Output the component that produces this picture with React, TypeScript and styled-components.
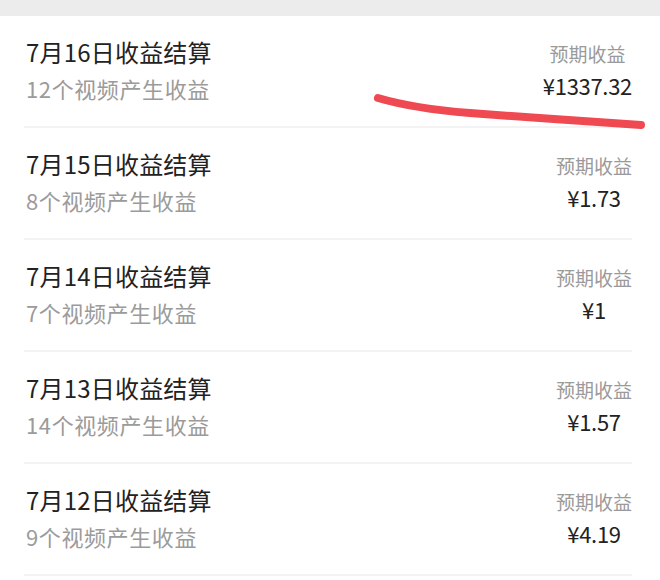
import React from 'react';
import styled, { createGlobalStyle } from 'styled-components';

interface Settlement {
  date: string;
  videos: number;
  amount: string;
}

const rows: Settlement[] = [
  { date: '7月16日', videos: 12, amount: '1337.32' },
  { date: '7月15日', videos: 8, amount: '1.73' },
  { date: '7月14日', videos: 7, amount: '1' },
  { date: '7月13日', videos: 14, amount: '1.57' },
  { date: '7月12日', videos: 9, amount: '4.19' },
];

const GlobalStyle = createGlobalStyle`
  html, body {
    margin: 0;
    padding: 0;
    background: #ffffff;
  }
  body {
    font-family: "Noto Sans CJK SC", "Noto Sans", sans-serif;
  }
`;

const Page = styled.div`
  position: relative;
  width: 660px;
  height: 580px;
  overflow: hidden;
  background: #ffffff;
`;

const TopStrip = styled.div`
  height: 16px;
  background: #ececec;
`;

const List = styled.div`
  display: flex;
  flex-direction: column;
`;

const Row = styled.div`
  display: flex;
  justify-content: space-between;
  align-items: stretch;
  height: 110px;
  margin: 0 28px 0 24px;
  border-bottom: 2px solid #f3f3f3;
`;

const Left = styled.div`
  display: flex;
  flex-direction: column;
  gap: 8px;
  padding: 22px 0 0 2px;
`;

const Title = styled.div`
  font-size: 24px;
  line-height: 28px;
  color: #222222;
  letter-spacing: 0.2px;
`;

const Sub = styled.div`
  font-size: 22px;
  line-height: 28px;
  color: #9b9b9b;
  letter-spacing: 0.6px;
`;

const Right = styled.div`
  display: flex;
  flex-direction: column;
  align-items: center;
  justify-content: center;
  gap: 3px;
  padding-bottom: 1px;
`;

const Label = styled.div`
  font-size: 19px;
  line-height: 26px;
  color: #9a9a9a;
`;

const Amount = styled.div`
  font-size: 22px;
  line-height: 30px;
  color: #222222;
  letter-spacing: -0.3px;
`;

const Scribble = styled.svg`
  position: absolute;
  left: 0;
  top: 0;
  pointer-events: none;
`;

export default function App() {
  return (
    <Page>
      <GlobalStyle />
      <TopStrip />
      <List>
        {rows.map((r) => (
          <Row key={r.date}>
            <Left>
              <Title>{r.date}收益结算</Title>
              <Sub>{r.videos}个视频产生收益</Sub>
            </Left>
            <Right>
              <Label>预期收益</Label>
              <Amount>¥{r.amount}</Amount>
            </Right>
          </Row>
        ))}
      </List>
      {/* red marker stroke drawn over the first row */}
      <Scribble width="660" height="580" viewBox="0 0 660 580">
        <path
          d="M378 98 C 395 103, 420 109, 470 113 S 600 122, 641 125"
          fill="none"
          stroke="#ef4a52"
          strokeWidth="8"
          strokeLinecap="round"
        />
      </Scribble>
    </Page>
  );
}
